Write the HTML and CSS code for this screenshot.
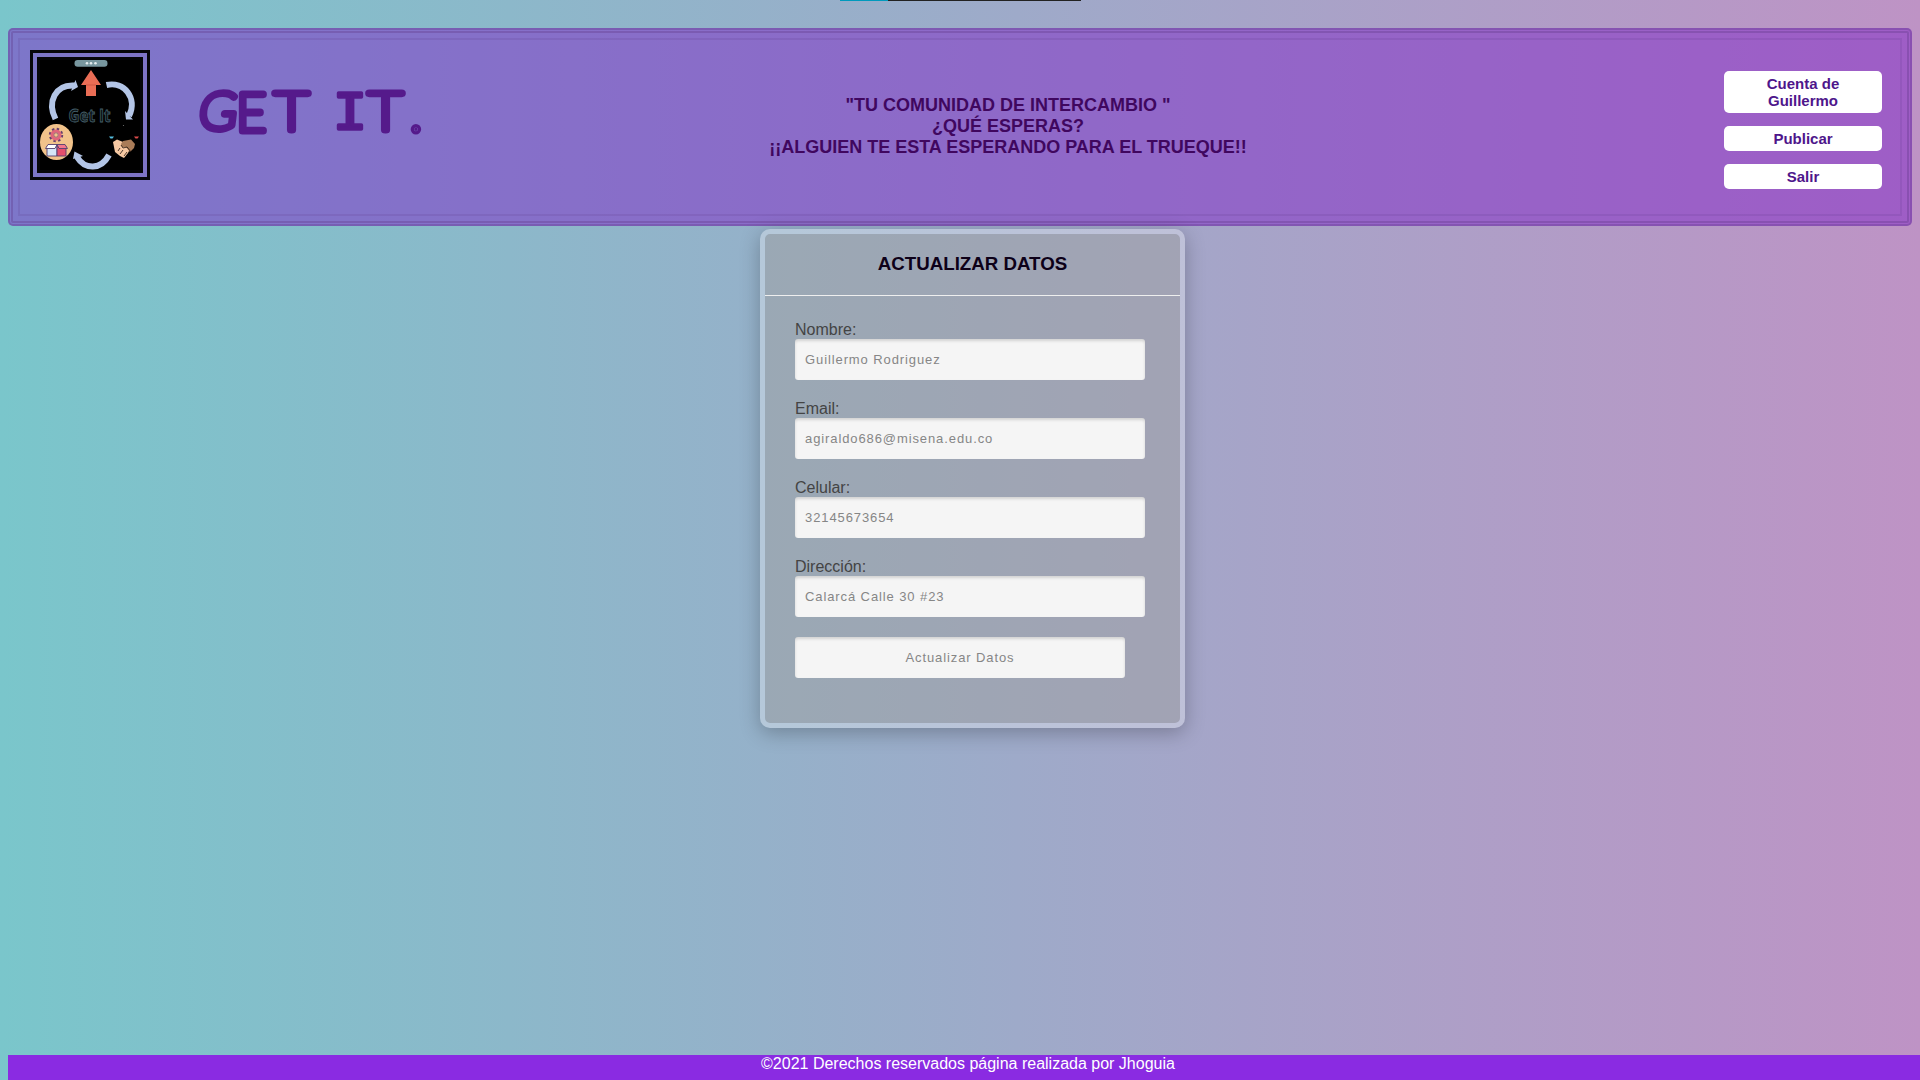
FILE: index.html
```html
<!DOCTYPE html>
<html lang="es">
<head>
<meta charset="utf-8">
<title>Get It</title>
<link rel="stylesheet" href="styles.css">
</head>
<body>
<div class="tab-strip"></div>
<header class="banner">
  <div class="brand">
    <svg class="logo" viewBox="0 0 100 110" width="100" height="110">
      <rect width="100" height="110" fill="#000"/>
      <rect x="34.5" y="0" width="33" height="6.8" rx="3.2" fill="#78979f"/>
      <g fill="#e4ecee"><circle cx="47" cy="3.3" r="1.3"/><circle cx="51" cy="3.3" r="1.3"/><circle cx="55.500" cy="3.3" r="1.300"/></g>
      <path d="M51 10 61 25H56V36H46V25H41Z" fill="#e96d55"/>
      <path d="M46 25H56" stroke="#cc5945" stroke-width="1"/>
      <g fill="none" stroke="#b3c5e6" stroke-width="6">
        <path d="M15.500 59C7 42 15 24 35 25.500"/>
        <path d="M66.500 25C84 21 98 38 89 56"/>
        <path d="M69 95C61 110 45 110 37 97"/>
      </g>
      <g fill="#b3c5e6"><path d="M35.500 20 38 27 31 31Z"/><path d="M85 51 86 59.500 93 59.500Z"/><path d="M33 99 34.500 91.500 43 96Z"/></g>
      <text x="28.500" y="62" class="logo-name" textLength="42" lengthAdjust="spacingAndGlyphs">Get It</text>
      <ellipse cx="16.500" cy="82" rx="16.500" ry="18" fill="#f2c38b"/>
      <circle cx="16" cy="75" r="5.600" fill="none" stroke="#65406d" stroke-width="3.200" stroke-dasharray="2.200 2.200"/>
      <circle cx="16" cy="75" r="4" fill="none" stroke="#e0657b" stroke-width="3"/>
      <circle cx="16" cy="75" r="2.200" fill="#f2c38b" stroke="#65406d" stroke-width=".6"/>
      <g stroke="#53406f" stroke-width=".9">
        <path d="M7 86H17V96H7Z" fill="#d5e6f7"/><path d="M17 86H26V96H17Z" fill="#e64f6c"/>
        <path d="M8 84.500H17L15 88.500H5.500Z" fill="#fff"/><path d="M17 84.500H25L27.500 88.500H19Z" fill="#f4778c"/>
      </g>
      <path d="M69 76.500H74L72.500 78.500H70.500Z" fill="#56bfe0"/><path d="M94 76.500H99L97.500 78.500H95.500Z" fill="#db4b4b"/>
      <path d="M73 82 77 79.500 83 82 90 89 88 93 84 98 80 96 75 92Z" fill="#f7c9a3"/>
      <path d="M83 81 91 79.500 95 84 94 88 90 92 86 87 82 87 81 84Z" fill="#a97c58"/>
      <g fill="none" stroke="#20130d" stroke-width=".8"><path d="M81 85 83 88 87 87 91 92M78 91 80 88M80 94 83 90M84 96 87 92"/></g>
      <circle cx="83.500" cy="65.500" r=".6" fill="#777"/>
    </svg>
    <svg class="wordmark" width="240" height="60" viewBox="190 80 240 60">
      <g transform="translate(14 0) skewX(-7)">
        <text x="199.500" y="129.500">G</text>
      </g>
      <text x="236.500" y="130.500">E</text>
      <text x="274.500" y="129.500" textLength="34" lengthAdjust="spacingAndGlyphs">T</text>
      <text x="333" y="129" class="slab" textLength="34" lengthAdjust="spacingAndGlyphs">I</text>
      <text x="368.500" y="129.500" textLength="34" lengthAdjust="spacingAndGlyphs">T</text>
      <text x="410" y="131">.</text>
    </svg>
  </div>
  <p class="slogan">"TU COMUNIDAD DE INTERCAMBIO "<br>¿QUÉ ESPERAS?<br>¡¡ALGUIEN TE ESTA ESPERANDO PARA EL TRUEQUE!!</p>
  <nav class="menu">
    <a>Cuenta de Guillermo</a>
    <a>Publicar</a>
    <a>Salir</a>
  </nav>
</header>
<main>
  <form class="card">
    <h3>ACTUALIZAR DATOS</h3>
    <div class="fields">
      <label>Nombre:<input value="Guillermo Rodriguez"></label>
      <label>Email:<input value="agiraldo686@misena.edu.co"></label>
      <label>Celular:<input value="32145673654"></label>
      <label>Dirección:<input value="Calarcá Calle 30 #23"></label>
      <button type="button">Actualizar Datos</button>
    </div>
  </form>
</main>
<footer>©2021 Derechos reservados página realizada por Jhoguia</footer>
</body>
</html>
```
FILE: styles.css
```css
* { box-sizing: border-box; }
body {
  margin: 0;
  height: 1080px;
  display: flex;
  flex-direction: column;
  overflow: hidden;
  font: 16px/18px "Liberation Sans", Arial, sans-serif;
  background: linear-gradient(90deg, #7ac6cb, #9eaac9 53%, #be93c5);
}
.tab-strip {
  width: 241px;
  height: 1px;
  margin-left: 840px;
  background: linear-gradient(90deg, #0099bc 48px, #222 48px);
}
.banner {
  height: 198px;
  margin: 27px 8px 0;
  padding: 17px 25px 0 17px;
  display: flex;
  justify-content: space-between;
  border: 5px double rgba(95, 55, 135, .33);
  border-radius: 5px;
  outline: 2px solid rgba(95, 55, 135, .16);
  outline-offset: -12px;
  background: rgba(128, 40, 200, .5);
}
.brand { display: flex; width: 472px; }
.logo { flex: none; box-sizing: content-box; border: 10px double #07070c; }
.logo-name { font: bold 17px "Open Sans", sans-serif; fill: #0a1013; stroke: #46606b; stroke-width: .8; }
.wordmark { margin: 30px 0 0 40px; overflow: visible; fill: #551a8b; stroke: #551a8b; stroke-width: 7.2; stroke-linejoin: round; }
.wordmark text { font: 100 51px Lato, sans-serif; }
.wordmark .slab { font: 53px "Liberation Mono", monospace; stroke-width: 3.4; }
.slogan {
  width: 480px;
  margin: 45px 0 0;
  text-align: center;
  font-weight: bold;
  font-size: 18px;
  line-height: 21px;
  color: #40075f;
}
.menu { width: 368px; padding-top: 21px; display: flex; flex-direction: column; align-items: flex-end; gap: 13px; }
.menu a {
  width: 158px;
  padding: 4px 30px;
  border-radius: 5px;
  background: #fff;
  color: #4e168b;
  text-align: center;
  font-weight: bold;
  font-size: 15px;
  line-height: 17px;
}
.card {
  width: 425px;
  height: 499px;
  margin: 3px 0 0 760px;
  border: 5px solid rgba(255, 255, 255, .3);
  border-radius: 10px;
  background: rgba(160, 160, 160, .5) padding-box;
  box-shadow: 0 5px 20px rgba(0, 0, 0, .25);
}
.card h3 {
  height: 62px;
  margin: 0;
  padding-top: 19px;
  border-bottom: 1px solid #eee;
  text-align: center;
  font-size: 18.72px;
  line-height: 21px;
  color: #0d0018;
}
.fields { padding: 25px 30px; display: flex; flex-direction: column; gap: 20px; }
.fields label { display: block; height: 59px; color: #444; }
.fields input, .fields button {
  display: block;
  width: 350px;
  height: 41px;
  padding: 0 10px;
  border: 0;
  border-radius: 3px;
  background: #f5f5f5;
  box-shadow: inset 0 2px 3px rgba(0, 0, 0, .14);
  font: 13px "Liberation Sans", Arial, sans-serif;
  letter-spacing: .9px;
  color: #868686;
}
.fields button { width: 330px; }
footer {
  width: 1920px;
  height: 25px;
  margin: auto 0 0 8px;
  background: blueviolet;
  color: #fff;
  text-align: center;
}
```
